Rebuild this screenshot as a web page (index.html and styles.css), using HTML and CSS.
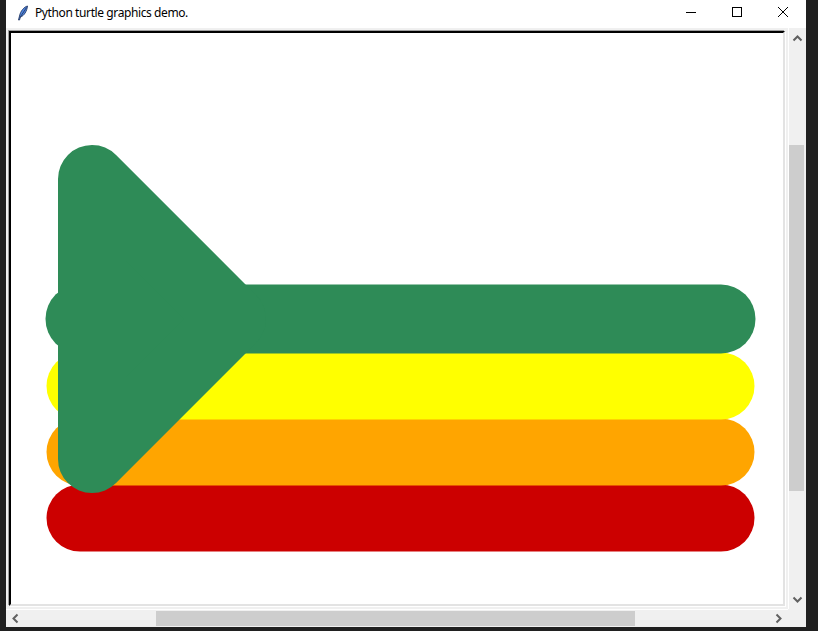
FILE: index.html
```html
<!DOCTYPE html>
<html>
<head>
<meta charset="utf-8">
<title>Python turtle graphics demo.</title>
<link rel="stylesheet" href="styles.css">
</head>
<body>
<div class="desktop">
  <div class="window">
    <div class="titlebar">
      <svg class="app-icon" width="12" height="16" viewBox="0 0 12 16">
        <path d="M10.5 1 C7 2 3.5 6 2.5 11 L1.5 15 L2.5 15 L3.4 12 C7 11 10 6 10.5 1 Z" fill="#4f86e0" stroke="#253a66" stroke-width="0.9"/>
        <path d="M9.5 2.5 L3 12.5" stroke="#1f2f55" stroke-width="0.8"/>
      </svg>
      <span class="title">Python turtle graphics demo.</span>
      <div class="controls">
        <svg class="ctl" width="46" height="28" viewBox="0 0 46 28"><path d="M18 12.5 H28" stroke="#000" stroke-width="1"/></svg>
        <svg class="ctl" width="46" height="28" viewBox="0 0 46 28"><rect x="18.5" y="7.5" width="9" height="9" fill="none" stroke="#000" stroke-width="1"/></svg>
        <svg class="ctl" width="46" height="28" viewBox="0 0 46 28"><path d="M18 7 L28 17 M28 7 L18 17" stroke="#000" stroke-width="1"/></svg>
      </div>
    </div>
    <div class="client">
      <div class="canvas-cell">
        <div class="canvas">
          <svg class="drawing" width="772" height="571" viewBox="11 33 772 571">
            <g stroke-linecap="round" fill="none" stroke-width="67">
              <line x1="80" y1="518" x2="721" y2="518" stroke="#cc0000"/>
              <line x1="80" y1="452" x2="721" y2="452" stroke="#ffa500"/>
              <line x1="80" y1="386" x2="721" y2="386" stroke="#ffff00"/>
              <line x1="80" y1="319" x2="721" y2="319" stroke="#2e8b57" stroke-width="69"/>
            </g>
            <polygon points="92,179 232,319 92,459" fill="#2e8b57" stroke="#2e8b57" stroke-width="68" stroke-linejoin="round"/>
          </svg>
        </div>
      </div>
      <div class="vscroll">
        <svg class="arrow up" width="17" height="17" viewBox="0 0 17 17"><path d="M4.5 10.5 L8.5 6.5 L12.5 10.5" fill="none" stroke="#606060" stroke-width="2"/></svg>
        <div class="vtrack"><div class="vthumb"></div></div>
        <svg class="arrow down" width="17" height="17" viewBox="0 0 17 17"><path d="M4.5 6.5 L8.5 10.5 L12.5 6.5" fill="none" stroke="#606060" stroke-width="2"/></svg>
      </div>
      <div class="hscroll">
        <svg class="arrow left" width="17" height="17" viewBox="0 0 17 17"><path d="M10.5 4.5 L6.5 8.5 L10.5 12.5" fill="none" stroke="#606060" stroke-width="2"/></svg>
        <div class="htrack"><div class="hthumb"></div></div>
        <svg class="arrow right" width="17" height="17" viewBox="0 0 17 17"><path d="M6.5 4.5 L10.5 8.5 L6.5 12.5" fill="none" stroke="#606060" stroke-width="2"/></svg>
      </div>
      <div class="corner"></div>
    </div>
  </div>
</div>
</body>
</html>
```
FILE: styles.css
```css
html, body {
  margin: 0;
  padding: 0;
  background: #1f1f1f;
}
.desktop {
  width: 818px;
  height: 631px;
  background: #202020;
  display: flex;
  overflow: hidden;
}
.window {
  margin-left: 6px;
  width: 800px;
  height: 627px;
  display: flex;
  flex-direction: column;
  background: #f0f0f0;
}
.titlebar {
  height: 28px;
  background: #ffffff;
  display: flex;
  align-items: center;
  font-family: "Noto Sans", "Liberation Sans", sans-serif;
  font-size: 12px;
  letter-spacing: -0.4px;
  color: #000;
}
.app-icon {
  margin-left: 11px;
  margin-top: -3px;
}
.title {
  margin-left: 6px;
  margin-top: -4px;
}
.controls {
  margin-left: auto;
  display: flex;
  align-self: flex-start;
}
.ctl {
  display: block;
}
.client {
  flex: 1;
  display: grid;
  grid-template-columns: 782px 18px;
  grid-template-rows: 581px 18px;
}
.canvas-cell {
  padding: 3px 0 0 3px;
}
.canvas {
  width: 772px;
  height: 571px;
  background: #ffffff;
  border-top: 2px solid #000;
  border-left: 2px solid #000;
  border-right: 2px solid #e3e3e3;
  border-bottom: 2px solid #e3e3e3;
  box-shadow: -1px -1px 0 #a0a0a0, 1px 1px 0 #ffffff;
  overflow: hidden;
}
.drawing {
  display: block;
}
.vscroll {
  border-left: 1px solid #ffffff;
  background: #f0f0f0;
  display: flex;
  flex-direction: column;
  width: 16px;
}
.vtrack {
  flex: 1;
  padding-top: 98px;
}
.vthumb {
  width: 15px;
  height: 346px;
  background: #cdcdcd;
}
.hscroll {
  border-top: 1px solid #ffffff;
  background: #f0f0f0;
  display: flex;
  align-items: stretch;
}
.htrack {
  flex: 1;
  padding: 1px 0 0 132px;
}
.hthumb {
  width: 479px;
  height: 15px;
  background: #cdcdcd;
}
.arrow {
  display: block;
  flex: none;
}
.arrow.up { margin-top: 2px; }
.arrow.down { margin-bottom: 1px; }
.arrow.left { margin-left: 1px; }
.arrow.right { margin-right: 1px; }
.corner {
  background: #f0f0f0;
}
```
